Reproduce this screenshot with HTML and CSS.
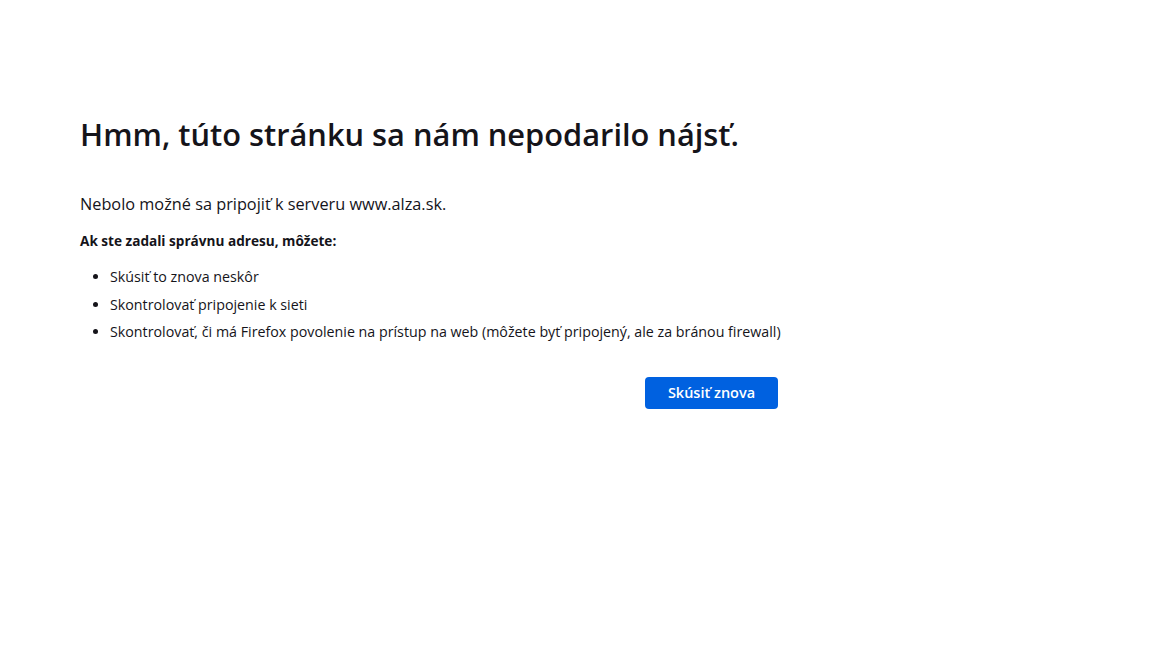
FILE: index.html
```html
<!DOCTYPE html>
<html lang="sk">
<head>
    <meta charset="UTF-8">
    <title>Problém pri načítaní stránky</title>
    <link rel="stylesheet" href="styles.css">
</head>
<body>
    <div class="container">
        <h1 class="title">Hmm, túto stránku sa nám nepodarilo nájsť.</h1>
        <p class="intro">Nebolo možné sa pripojiť k serveru www.alza.sk.</p>
        <p class="hint">Ak ste zadali správnu adresu, môžete:</p>
        <ul class="tips">
            <li>Skúsiť to znova neskôr</li>
            <li>Skontrolovať pripojenie k sieti</li>
            <li>Skontrolovať, či má Firefox povolenie na prístup na web (môžete byť pripojený, ale za bránou firewall)</li>
        </ul>
        <div class="button-group">
            <button class="primary">Skúsiť znova</button>
        </div>
    </div>
</body>
</html>
```

FILE: styles.css
```css
body {
    margin: 0;
    background: #fff;
    color: #15141a;
    font-family: "Open Sans", "Noto Sans", sans-serif;
}
.container {
    width: 720px;
    padding: 114px 0 0 80px;
    display: flex;
    flex-direction: column;
}
.title {
    margin: 0;
    font-size: 30.8px;
    line-height: 40px;
    font-weight: 600;
}
.intro {
    margin: 38px 0 0;
    font-size: 16.3px;
    line-height: 24px;
}
.hint {
    margin: 15px 0 0;
    font-size: 13.6px;
    line-height: 20px;
    font-weight: 700;
}
.tips {
    margin: 16px 0 0;
    padding-left: 30px;
    font-size: 14.25px;
    line-height: 20px;
}
.tips li {
    margin-bottom: 7.5px;
}
.button-group {
    display: flex;
    justify-content: flex-end;
    margin-top: 27px;
    padding-right: 22px;
}
.primary {
    width: 133px;
    height: 32px;
    border: none;
    border-radius: 4px;
    background: #0061e0;
    color: #fff;
    font-family: inherit;
    font-size: 14.5px;
    font-weight: 600;
    cursor: pointer;
}
```
